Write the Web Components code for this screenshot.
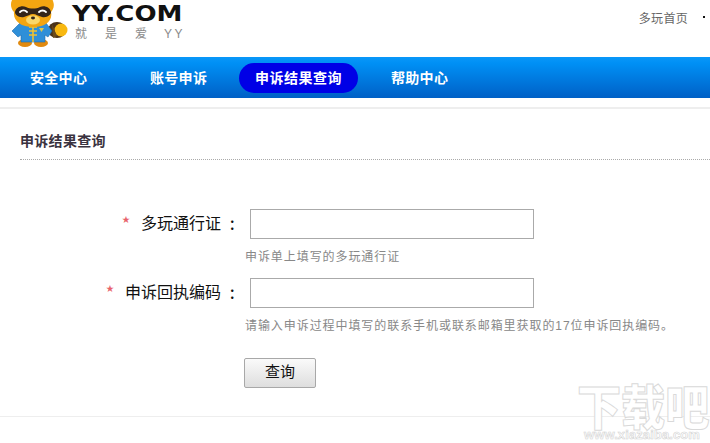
<!DOCTYPE html>
<html>
<head>
<meta charset="utf-8">
<style>
html,body{margin:0;padding:0;background:#fff;}
body{width:710px;height:443px;overflow:hidden;position:relative;font-family:"Liberation Sans","Noto Sans CJK SC",sans-serif;}
</style>
</head>
<body>
<yy-header></yy-header>
<yy-nav>
    <yy-nav-item>安全中心</yy-nav-item>
    <yy-nav-item>账号申诉</yy-nav-item>
    <yy-nav-item active>申诉结果查询</yy-nav-item>
    <yy-nav-item>帮助中心</yy-nav-item>
</yy-nav>
<yy-panel heading="申诉结果查询">
    <yy-field label="多玩通行证" hint="申诉单上填写的多玩通行证"></yy-field>
    <yy-field label="申诉回执编码" hint="请输入申诉过程中填写的联系手机或联系邮箱里获取的17位申诉回执编码。"></yy-field>
    <yy-button>查询</yy-button>
</yy-panel>
<yy-watermark></yy-watermark>

<script>
const fontStack = '"Liberation Sans","Noto Sans CJK SC",sans-serif'

class YYHeader extends HTMLElement {
    constructor() {
        super()
        this.attachShadow({ mode: "open" }).innerHTML = `
        <style>
        :host{display:flex;height:57px;overflow:hidden;font-family:${fontStack};}
        .mascot{display:block;margin:-3px 0 0 8px;flex:none;}
        .brand{margin-left:4px;padding-top:3px;}
        .name{font:bold 21px/22px "DejaVu Sans",sans-serif;color:#111;height:22px;transform-origin:0 0;transform:scaleX(1.24);white-space:nowrap;}
        .sub{display:flex;font-size:12px;line-height:14px;color:#8a8a8a;margin:2px 0 0 3px;}
        .sub span{width:30px;}
        .sub .yy{width:auto;margin-left:-1px;letter-spacing:2.500px;font-size:12px;}
        .links{margin-left:auto;display:flex;align-items:center;height:34px;font-size:12px;color:#666;letter-spacing:.3px;}
        .dot{width:2px;height:2px;background:#111;margin:0 5px 0 15px;}
        </style>
        <svg class="mascot" width="60" height="54" viewBox="0 0 60 54">
            <ellipse cx="49" cy="33" rx="9" ry="8" fill="#4a3218"/>
            <circle cx="53" cy="33" r="6.500" fill="#f8b810"/>
            <path d="M44 27l5 12-4 2z" fill="#6a4a1a"/>
            <ellipse cx="17" cy="46" rx="7" ry="4" fill="#e08a10"/>
            <ellipse cx="33" cy="46" rx="7" ry="4" fill="#e08a10"/>
            <path d="M12 26h26l6 8-4 6-3-2v7H13v-7l-3 2-6-6z" fill="#2f8fd8" stroke="#1d6cb0" stroke-width=".6"/>
            <path d="M25 26v19" stroke="#f2c230" stroke-width="1.6"/>
            <path d="M21 30h8M21 34h8M21 38h8" stroke="#f2c230" stroke-width="1.4"/>
            <path d="M31 31h5l-2.500 4z" fill="#d8c850"/>
            <path d="M4 3c2-3 8-3 10 0 7-3 15-3 22 0 2-3 8-3 9 1 2 5 0 9-2 11 2 9-6 15-18 15S5 24 6 15C3 12 2 7 4 3z" fill="#f3a511"/>
            <path d="M7 15C8 10 14 8 18 10c4 2 10 2 14 0 4-2 10 0 11 5 0 3-4 6-9 5-4-1-6-3-9-3s-5 2-9 3C11 21 7 18 7 15z" fill="#33241a"/>
            <path d="M12 15c2-2 5-2 7 0M31 15c2-2 5-2 7 0" fill="none" stroke="#fff" stroke-width="1.800" stroke-linecap="round"/>
            <ellipse cx="25" cy="23" rx="7" ry="4.500" fill="#fbd76a"/>
            <ellipse cx="25" cy="21" rx="2" ry="1.400" fill="#33241a"/>
        </svg>
        <div class="brand">
            <div class="name">YY.COM</div>
            <div class="sub"><span>就</span><span>是</span><span>爱</span><span class="yy">YY</span></div>
        </div>
        <div class="links">多玩首页<i class="dot"></i></div>
        `
    }
}

class YYNav extends HTMLElement {
    constructor() {
        super()
        this.attachShadow({ mode: "open" }).innerHTML = `
        <style>
        :host{display:flex;align-items:center;height:41px;padding-left:13px;gap:0;
            background:linear-gradient(#0a97f8,#0090f5 15%,#0060c6);box-sizing:border-box;}
        </style>
        <slot></slot>
        `
    }
}

class YYNavItem extends HTMLElement {
    constructor() {
        super()
        this.attachShadow({ mode: "open" }).innerHTML = `
        <style>
        :host{display:block;width:120px;font:bold 14px/30px ${fontStack};color:#fff;letter-spacing:.3px;}
        :host([active]){margin-left:-14px;margin-right:16px;width:119px;height:30px;border-radius:15px;background:#0000e6;text-align:center;letter-spacing:.5px;}
        div{padding-left:17px;}
        :host([active]) div{padding-left:0;}
        </style>
        <div><slot></slot></div>
        `
    }
}

class YYPanel extends HTMLElement {
    constructor() {
        super()
        this.attachShadow({ mode: "open" }).innerHTML = `
        <style>
        :host{display:block;margin-top:9px;height:310px;box-sizing:border-box;
            border-top:2px solid #eee;border-bottom:1px solid #eee;font-family:${fontStack};}
        h2{margin:0 0 0 20px;padding:0;height:51px;line-height:65px;box-sizing:border-box;
            font-size:14px;font-weight:bold;color:#3a3340;letter-spacing:.3px;border-bottom:1px dotted #aaa;}
        .body{padding-top:49px;}
        </style>
        <h2></h2>
        <div class="body"><slot></slot></div>
        `
        this.shadowRoot.querySelector('h2').textContent = this.getAttribute('heading')
    }
}

class YYField extends HTMLElement {
    constructor() {
        super()
        this.attachShadow({ mode: "open" }).innerHTML = `
        <style>
        :host{display:grid;grid-template-columns:250px 284px;grid-template-rows:30px 39px;font-family:${fontStack};}
        .label{display:flex;justify-content:flex-end;align-items:center;padding-bottom:5px;box-sizing:border-box;font-size:16px;color:#111;white-space:nowrap;}
        .star{color:#e8636b;font-size:8px;margin-right:11px;position:relative;top:-3px;}
        .colon{margin:0 12px 0 8px;font-weight:bold;font-size:13px;width:0.7em;text-align:center;position:relative;top:2px;}
        .box{border:1px solid #aaa;box-sizing:border-box;height:30px;width:284px;background:#fff;}
        .hint{grid-column:2;margin-left:-5px;padding-top:10px;font-size:12px;line-height:17px;letter-spacing:.93px;color:#888;white-space:nowrap;}
        </style>
        <div class="label"><span class="star">★</span><span class="text"></span><span class="colon">：</span></div>
        <div class="box"></div>
        <div class="hint"></div>
        `
        this.shadowRoot.querySelector('.text').textContent = this.getAttribute('label')
        this.shadowRoot.querySelector('.hint').textContent = this.getAttribute('hint')
    }
}

class YYButton extends HTMLElement {
    constructor() {
        super()
        this.attachShadow({ mode: "open" }).innerHTML = `
        <style>
        :host{display:flex;align-items:center;justify-content:center;width:72px;height:30px;margin:11px 0 0 244px;box-sizing:border-box;
            border:1px solid #a8a8a8;border-radius:2px;background:linear-gradient(#fafafa,#dedede);
            font:15px/24px ${fontStack};color:#111;padding-bottom:2px;}
        </style>
        <slot></slot>
        `
    }
}

class YYWatermark extends HTMLElement {
    constructor() {
        super()
        this.attachShadow({ mode: "open" }).innerHTML = `
        <style>
        :host{position:absolute;left:566px;top:378px;width:136px;font-family:"Noto Sans CJK SC",sans-serif;color:#fff;text-align:right;}
        .big{font-size:48px;line-height:52px;height:52px;font-weight:900;-webkit-text-stroke:1px #d9d9d9;white-space:nowrap;transform-origin:100% 50%;transform:scaleX(.92);}
        .small{font:bold 13px/12px "Liberation Sans",sans-serif;-webkit-text-stroke:.6px #d4d4d4;letter-spacing:.1px;white-space:nowrap;padding-right:2px;margin-top:-1px;}
        </style>
        <div class="big">下载吧</div>
        <div class="small">www.xiazaiba.com</div>
        `
    }
}

customElements.define("yy-header", YYHeader)
customElements.define("yy-nav", YYNav)
customElements.define("yy-nav-item", YYNavItem)
customElements.define("yy-panel", YYPanel)
customElements.define("yy-field", YYField)
customElements.define("yy-button", YYButton)
customElements.define("yy-watermark", YYWatermark)
</script>
</body>
</html>
